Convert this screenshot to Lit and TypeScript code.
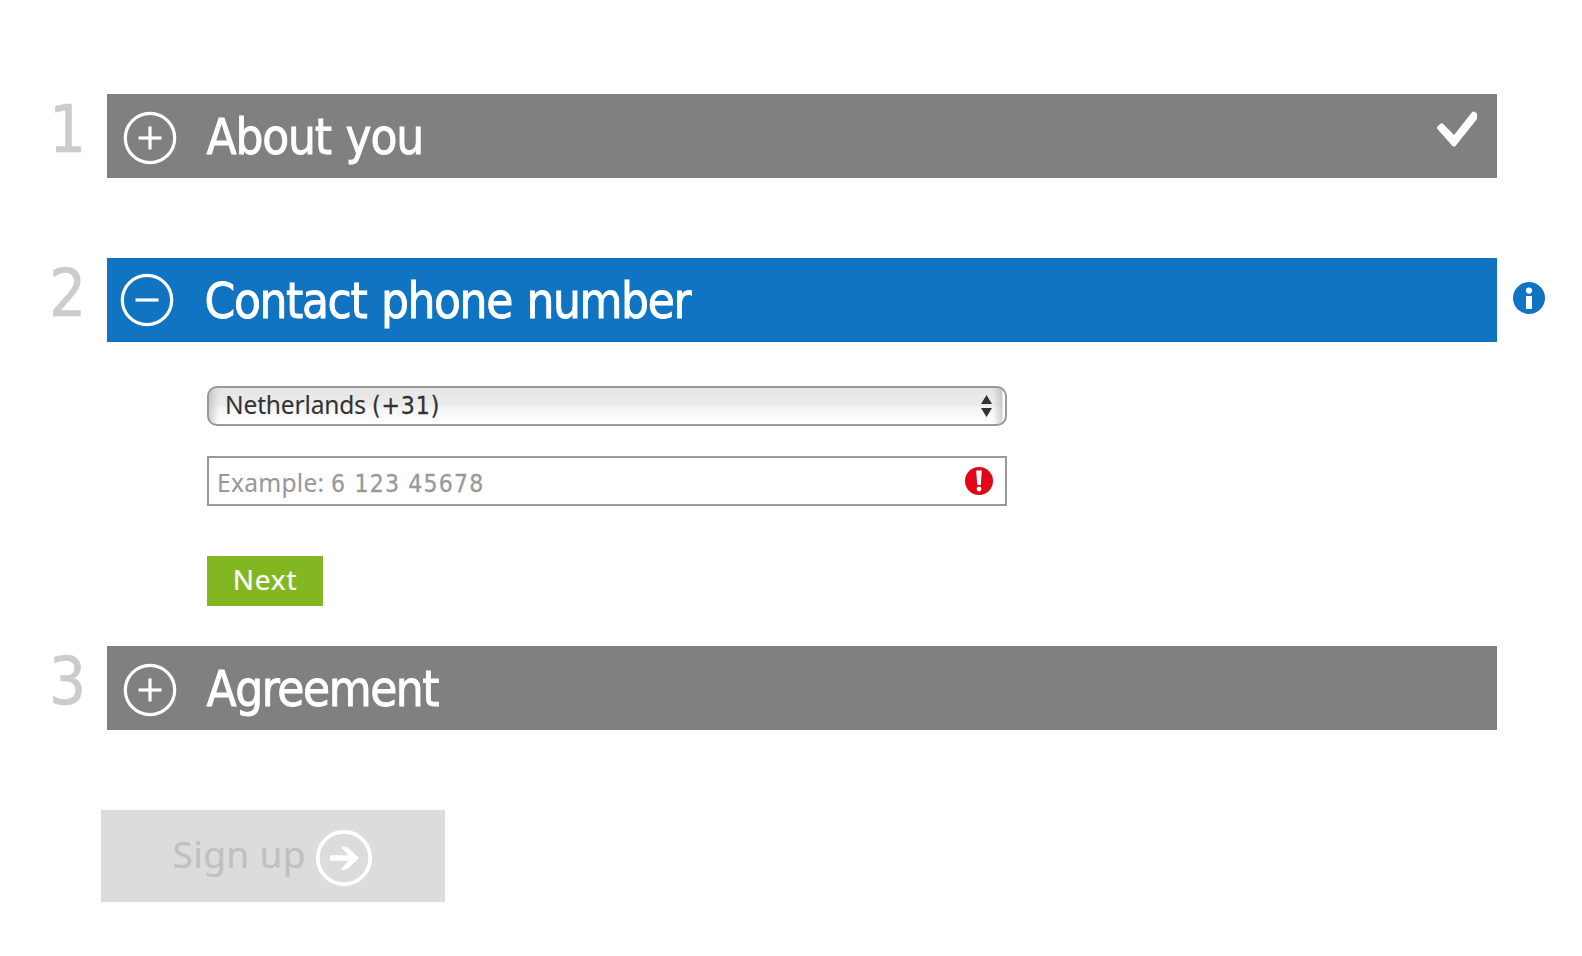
import { LitElement, html, css, svg, nothing } from "lit";
import { customElement, property } from "lit/decorators.js";
import { styleMap } from "lit/directives/style-map.js";

const headingFont = css`"DejaVu Sans Condensed", "DejaVu Sans", sans-serif`;
const bodyFont = css`"Noto Sans", "Open Sans", sans-serif`;

@customElement("step-header")
class StepHeader extends LitElement {
  @property({ type: Number }) step = 1;
  @property() label = "";
  @property({ type: Number }) tracking = -1;
  @property({ type: Boolean }) open = false;
  @property({ type: Boolean }) done = false;

  static styles = css`
    :host { display: flex; height: 84px; font-family: ${headingFont}; }
    .number { width: 58px; padding-left: 49px; color: #ccc; font-size: 65px; line-height: 72px; -webkit-text-stroke: 0.6px #ccc; }
    .bar { display: flex; width: 1390px; height: 84px; background: #808080; color: #fff; }
    .bar.open { background: #1174c3; }
    .toggle { width: 56px; height: 56px; margin: 16px 29px 0 14.5px; flex: none; }
    .open .toggle { margin: 14px 30.1px 0 11.5px; }
    .title { flex: 1; font-size: 49px; line-height: 84px; padding-top: 2px; word-spacing: 2px; white-space: nowrap; -webkit-text-stroke: 0.8px #fff; }
    .check { width: 42px; height: 42px; margin: 16px 20px 0 0; }
    .info { width: 34px; height: 34px; margin: 22.7px 0 0 14.5px; }
  `;

  render() {
    return html`
      <div class="number">${this.step}</div>
      <div class="bar ${this.open ? "open" : ""}">
        <svg class="toggle" viewBox="-28 -28 56 56" fill="none" stroke="#fff" stroke-width="3.2">
          <circle r="24.7"></circle>
          <path d="M-11.5 0H11.5"></path>
          ${this.open ? nothing : svg`<path d="M0 -11.5V11.5"></path>`}
        </svg>
        <div class="title" style=${styleMap({ letterSpacing: `${this.tracking}px` })}>${this.label}</div>
        ${this.done
          ? html`<svg class="check" viewBox="0 0 42 42" fill="#fff">
              <path d="M2 18.5Q1.5 17.5 2.5 16.5L5.5 13.8Q6.8 12.8 8 13.8L19 25L37 2.3Q38 1 39.5 1.8L42 3.5V9L20.5 36Q19 37.5 17.5 36Z"></path>
            </svg>`
          : nothing}
      </div>
      ${this.open
        ? html`<svg class="info" viewBox="-17 -17 34 34">
            <circle r="16" fill="#1174c3"></circle>
            <circle cy="-7.4" r="3.1" fill="#fff"></circle>
            <path d="M-3 -2H3V11H-3Z" fill="#fff"></path>
          </svg>`
        : nothing}
    `;
  }
}

@customElement("app-root")
class AppRoot extends LitElement {
  static styles = css`
    :host { display: block; height: 956px; padding-top: 94px; box-sizing: border-box; background: #fff; overflow: hidden; font-family: ${bodyFont}; }
    .first { margin-bottom: 80px; }
    .form { display: flex; flex-direction: column; align-items: flex-start; padding: 44px 0 40px 207px; }
    .select, .input { display: flex; justify-content: space-between; box-sizing: border-box; width: 800px; border: 2px solid #999; font-size: 24.5px; white-space: nowrap; -webkit-text-stroke: 0.1px; }
    .select {
      height: 40px; border-radius: 10px; margin-bottom: 30px; padding: 0 12px 0 16px; color: #333; line-height: 33px; letter-spacing: -0.15px;
      background:
        linear-gradient(90deg, rgba(150,150,150,.4), rgba(150,150,150,0) 10px, rgba(150,150,150,0) 784px, rgba(150,150,150,.4) 793px, #fff 794px),
        linear-gradient(#e5e5e5, #ececec 50%, #f4f4f4 55%, #fff);
    }
    .digits { font-family: ${headingFont}; letter-spacing: 1.2px; line-height: 1; -webkit-text-stroke: 0.3px; }
    .select .digits { letter-spacing: 0.9px; }
    .arrows { width: 12px; height: 24px; margin-top: 6px; }
    .input { height: 50px; margin-bottom: 50px; padding: 0 11px 0 8px; color: #999; line-height: 49px; letter-spacing: 0.3px; }
    .error { width: 30px; height: 30px; margin-top: 8px; }
    .next { width: 116px; height: 50px; background: #82b721; color: #fff; font-size: 28px; line-height: 47px; letter-spacing: 0.8px; text-align: center; -webkit-text-stroke: 0.2px; }
    .signup { display: flex; width: 344px; height: 92px; margin: 80px 0 0 101px; padding-left: 71.5px; box-sizing: border-box; background: #dcdcdc; color: #c0c0c0; font-size: 37px; line-height: 88px; letter-spacing: 0.4px; white-space: nowrap; -webkit-text-stroke: 0.2px; }
    .label { width: 143.5px; }
    .go { width: 56px; height: 56px; margin-top: 20px; }
  `;

  render() {
    return html`
      <step-header class="first" .step=${1} label="About you" .tracking=${-1.2} done></step-header>
      <step-header .step=${2} label="Contact phone number" .tracking=${-1.4} open></step-header>
      <div class="form">
        <div class="select">
          <span>Netherlands <span class="digits">(+31)</span></span>
          <svg class="arrows" viewBox="0.5 0 12 24" fill="#333">
            <path d="M6 1L11.5 10H0.5ZM6 23L0.5 14H11.5Z"></path>
          </svg>
        </div>
        <div class="input">
          <span>Example: <span class="digits">6 123 45678</span></span>
          <svg class="error" viewBox="-15 -15 30 30">
            <circle r="14" fill="#e30617"></circle>
            <path d="M-2.8 -10.5H2.8L1.8 4H-1.8Z" fill="#fff"></path>
            <circle cy="8" r="2.4" fill="#fff"></circle>
          </svg>
        </div>
        <div class="next">Next</div>
      </div>
      <step-header .step=${3} label="Agreement" .tracking=${-1.45}></step-header>
      <div class="signup">
        <span class="label">Sign up</span>
        <svg class="go" viewBox="-28 -28 56 56" fill="none" stroke="#fff">
          <circle r="26.2" stroke-width="3.8"></circle>
          <path d="M-14 0H10" stroke-width="5.4"></path>
          <path d="M-3 -11Q2 -12.5 5 -9.5L15 0L5 9.5Q2 12.5 -3 11.5L6.5 0Z" fill="#fff" stroke="none"></path>
        </svg>
      </div>
    `;
  }
}
